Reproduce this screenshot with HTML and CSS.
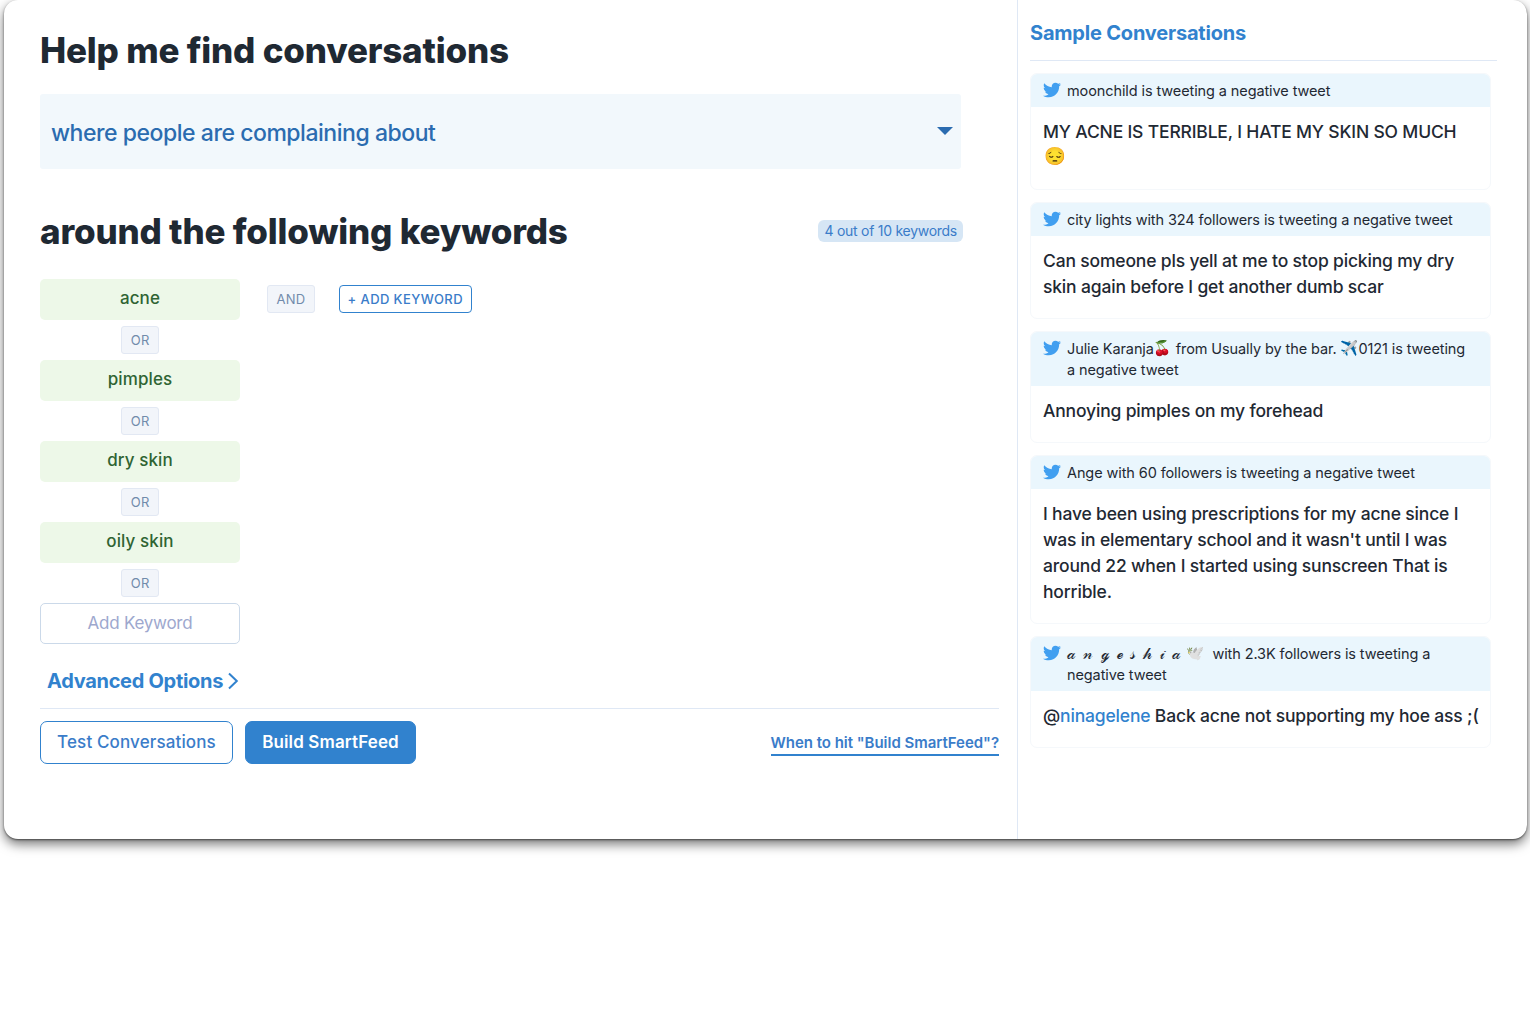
FILE: index.html
```html
<!DOCTYPE html>
<html lang="en">
<head>
  <meta charset="UTF-8">
  <title>Find conversations</title>
  <link rel="stylesheet" href="styles.css">
</head>
<body>
  <!-- Twitter icon, reused in every card -->
  <svg class="sprite" width="0" height="0">
    <symbol id="twitter" viewBox="0 0 24 24">
      <path d="M23.954 4.569c-.885.389-1.83.654-2.825.775 1.014-.611 1.794-1.574 2.163-2.723-.951.555-2.005.959-3.127 1.184-.896-.959-2.173-1.559-3.591-1.559-2.717 0-4.92 2.203-4.92 4.917 0 .39.045.765.127 1.124C7.691 8.094 4.066 6.13 1.64 3.161c-.427.722-.666 1.561-.666 2.475 0 1.71.87 3.213 2.188 4.096-.807-.026-1.566-.248-2.228-.616v.061c0 2.385 1.693 4.374 3.946 4.827-.413.111-.849.171-1.296.171-.314 0-.615-.03-.916-.086.631 1.953 2.445 3.377 4.604 3.417-1.68 1.319-3.809 2.105-6.102 2.105-.39 0-.779-.023-1.17-.067 2.189 1.394 4.768 2.209 7.557 2.209 9.054 0 13.999-7.496 13.999-13.986 0-.209 0-.42-.015-.63.961-.689 1.8-1.56 2.46-2.548l-.047-.02z"/>
    </symbol>
  </svg>

  <div class="window">
    <main class="builder">
      <h1>Help me find conversations</h1>
      <div class="select">
        <span>where people are complaining about</span>
        <i class="caret"></i>
      </div>

      <div class="keywords-head">
        <h1>around the following keywords</h1>
        <span class="count">4 out of 10 keywords</span>
      </div>

      <div class="keywords">
        <div class="group">
          <div class="keyword">acne</div>
          <span class="op">OR</span>
          <div class="keyword">pimples</div>
          <span class="op">OR</span>
          <div class="keyword">dry skin</div>
          <span class="op">OR</span>
          <div class="keyword">oily skin</div>
          <span class="op">OR</span>
          <div class="keyword empty">Add Keyword</div>
        </div>
        <span class="op and">AND</span>
        <button class="add">+ ADD KEYWORD</button>
      </div>

      <a class="advanced">Advanced Options
        <svg width="12" height="18" viewBox="0 0 12 18"><path d="M2 1.5L9.8 9L2 16.5"/></svg>
      </a>

      <div class="actions">
        <button class="btn">Test Conversations</button>
        <button class="btn primary">Build SmartFeed</button>
        <a class="help">When to hit "Build SmartFeed"?</a>
      </div>
    </main>

    <aside class="samples">
      <h2>Sample Conversations</h2>

      <div class="card">
        <div class="card-head">
          <svg class="bird"><use href="#twitter"/></svg>
          <span>moonchild is tweeting a negative tweet</span>
        </div>
        <p>MY ACNE IS TERRIBLE, I HATE MY SKIN SO MUCH <span class="emoji">😔</span></p>
      </div>

      <div class="card">
        <div class="card-head">
          <svg class="bird"><use href="#twitter"/></svg>
          <span>city lights with 324 followers is tweeting a negative tweet</span>
        </div>
        <p>Can someone pls yell at me to stop picking my dry skin again before I get another dumb scar</p>
      </div>

      <div class="card">
        <div class="card-head">
          <svg class="bird"><use href="#twitter"/></svg>
          <span>Julie Karanja<span class="emoji">🍒</span> from Usually by the bar. <span class="emoji">✈️</span>0121 is tweeting a negative tweet</span>
        </div>
        <p>Annoying pimples on my forehead</p>
      </div>

      <div class="card">
        <div class="card-head">
          <svg class="bird"><use href="#twitter"/></svg>
          <span>Ange with 60 followers is tweeting a negative tweet</span>
        </div>
        <p>I have been using prescriptions for my acne since I was in elementary school and it wasn't until I was around 22 when I started using sunscreen That is horrible.</p>
      </div>

      <div class="card">
        <div class="card-head">
          <svg class="bird"><use href="#twitter"/></svg>
          <span><span class="script">𝒶 𝓃 ℊ ℯ 𝓈 𝒽 𝒾 𝒶</span> <span class="emoji">🕊</span>&nbsp; with 2.3K followers is tweeting a negative tweet</span>
        </div>
        <p>@<a>ninagelene</a> Back acne not supporting my hoe ass ;(</p>
      </div>
    </aside>
  </div>
</body>
</html>
```

FILE: styles.css
```css
* {
  box-sizing: border-box;
}

body {
  margin: 0;
  min-height: 1010px;
  background: #fff;
  color: #1f2933;
  font-family: Inter, "Liberation Sans", sans-serif;
}

h1, h2, p {
  margin: 0;
}

button {
  font-family: inherit;
  background: #fff;
}

.sprite {
  display: block;
}

.window {
  display: flex;
  width: 1523px;
  height: 839px;
  margin-left: 4px;
  background: #fff;
  border-radius: 14px;
  box-shadow: 0 1px 2px rgba(0, 0, 0, 0.5), 0 5px 12px rgba(0, 0, 0, 0.55);
}

.builder {
  width: 1013px;
  padding: 25px 18px 0 36px;
}

h1 {
  font-size: 35px;
  line-height: 50px;
  font-weight: 800;
  letter-spacing: -0.19px;
}

.select {
  display: flex;
  align-items: center;
  justify-content: space-between;
  width: 921px;
  height: 75px;
  margin-top: 19px;
  padding: 2px 8px 0 11px;
  background: #f2f8fc;
  border-radius: 3px;
  color: #2b6cb0;
  font-size: 23px;
  font-weight: 500;
  letter-spacing: -0.46px;
}

.caret {
  border: 8px solid transparent;
  border-top-color: #2b6cb0;
  border-bottom: 0;
  margin-bottom: 4px;
}

.keywords-head {
  display: flex;
  align-items: center;
  justify-content: space-between;
  width: 923px;
  margin-top: 37px;
}

.count {
  height: 22px;
  padding: 0 6px 0 7px;
  border-radius: 6px;
  background: #d6e6f5;
  color: #3a7cc9;
  font-size: 14px;
  line-height: 22px;
  letter-spacing: -0.27px;
}

.keywords {
  display: flex;
  align-items: flex-start;
  margin-top: 23px;
}

.group {
  display: flex;
  flex-direction: column;
  align-items: center;
  gap: 6px;
  width: 200px;
}

.keyword {
  width: 200px;
  height: 41px;
  border-radius: 5px;
  background: #edf8e8;
  color: #2f6433;
  font-size: 17px;
  line-height: 38px;
  font-weight: 500;
  text-align: center;
  letter-spacing: 0.1px;
}

.keyword.empty {
  background: #fff;
  border: 1px solid #cbd9e9;
  color: #9da8ce;
  font-weight: 400;
  letter-spacing: -0.25px;
}

.op {
  height: 28px;
  padding: 0 8px 0 8.5px;
  border: 1px solid #e2e8f3;
  border-radius: 3px;
  background: #f2f5fa;
  color: #718bab;
  font-size: 13px;
  line-height: 27px;
  letter-spacing: 0.3px;
}

.and {
  margin: 6px 24px 0 27px;
}

.add {
  height: 28px;
  margin-top: 6px;
  padding: 0 8px;
  border: 1px solid #3182ce;
  border-radius: 4px;
  color: #3a7cc9;
  font-size: 13px;
  font-weight: 500;
  letter-spacing: 0.41px;
}

.advanced {
  display: flex;
  align-items: center;
  gap: 4px;
  margin: 22px 0 0 7px;
  height: 30px;
  color: #3182ce;
  font-size: 20px;
  font-weight: 700;
  letter-spacing: -0.3px;
}

.advanced svg {
  fill: none;
  stroke: #3182ce;
  stroke-width: 2;
}

.actions {
  display: flex;
  align-items: center;
  gap: 12px;
  margin-top: 12px;
  padding-top: 12px;
  border-top: 1px solid #dfe8f5;
}

.btn {
  width: 193px;
  height: 43px;
  padding: 0 0 1px;
  border: 1px solid #3182ce;
  border-radius: 7px;
  color: #3a7cc9;
  font-size: 17px;
  font-weight: 500;
  letter-spacing: 0.13px;
}

.btn.primary {
  width: 171px;
  background: #3182ce;
  color: #fff;
  font-weight: 600;
}

.help {
  margin-left: auto;
  margin-top: 2px;
  border-bottom: 2px solid #3182ce;
  color: #3a7cc9;
  font-size: 15px;
  line-height: 23px;
  font-weight: 600;
  letter-spacing: -0.03px;
}

.samples {
  flex: 1;
  padding: 18px 30px 0 12px;
  border-left: 1px solid #dfe8f5;
}

.samples h2 {
  height: 43px;
  margin-bottom: 12px;
  border-bottom: 1px solid #dfe8f5;
  color: #3182ce;
  font-size: 20px;
  line-height: 30px;
  font-weight: 700;
  letter-spacing: -0.2px;
}

.card {
  width: 461px;
  margin-bottom: 12px;
  border: 1px solid #f5f8fb;
  border-radius: 7px;
  overflow: hidden;
}

.card-head {
  display: flex;
  padding: 6px 18px 6px 12px;
  background: #eaf6fd;
  font-size: 14.5px;
  line-height: 21px;
  letter-spacing: -0.1px;
}

.bird {
  flex: none;
  width: 18px;
  height: 18px;
  margin: 1px 6px 0 0;
  fill: #419ff0;
}

.card p {
  padding: 12px 10px 18px 12px;
  font-size: 17.5px;
  line-height: 26px;
  font-weight: 500;
  letter-spacing: -0.17px;
}

.card a {
  color: #3182ce;
}

.emoji {
  font-family: "Noto Color Emoji", Inter, sans-serif;
  line-height: 0;
  vertical-align: 1px;
}

.card p .emoji {
  margin-left: 1px;
  vertical-align: 2px;
}

.script {
  font-size: 16px;
  line-height: 0;
  letter-spacing: 1.4px;
}
```
